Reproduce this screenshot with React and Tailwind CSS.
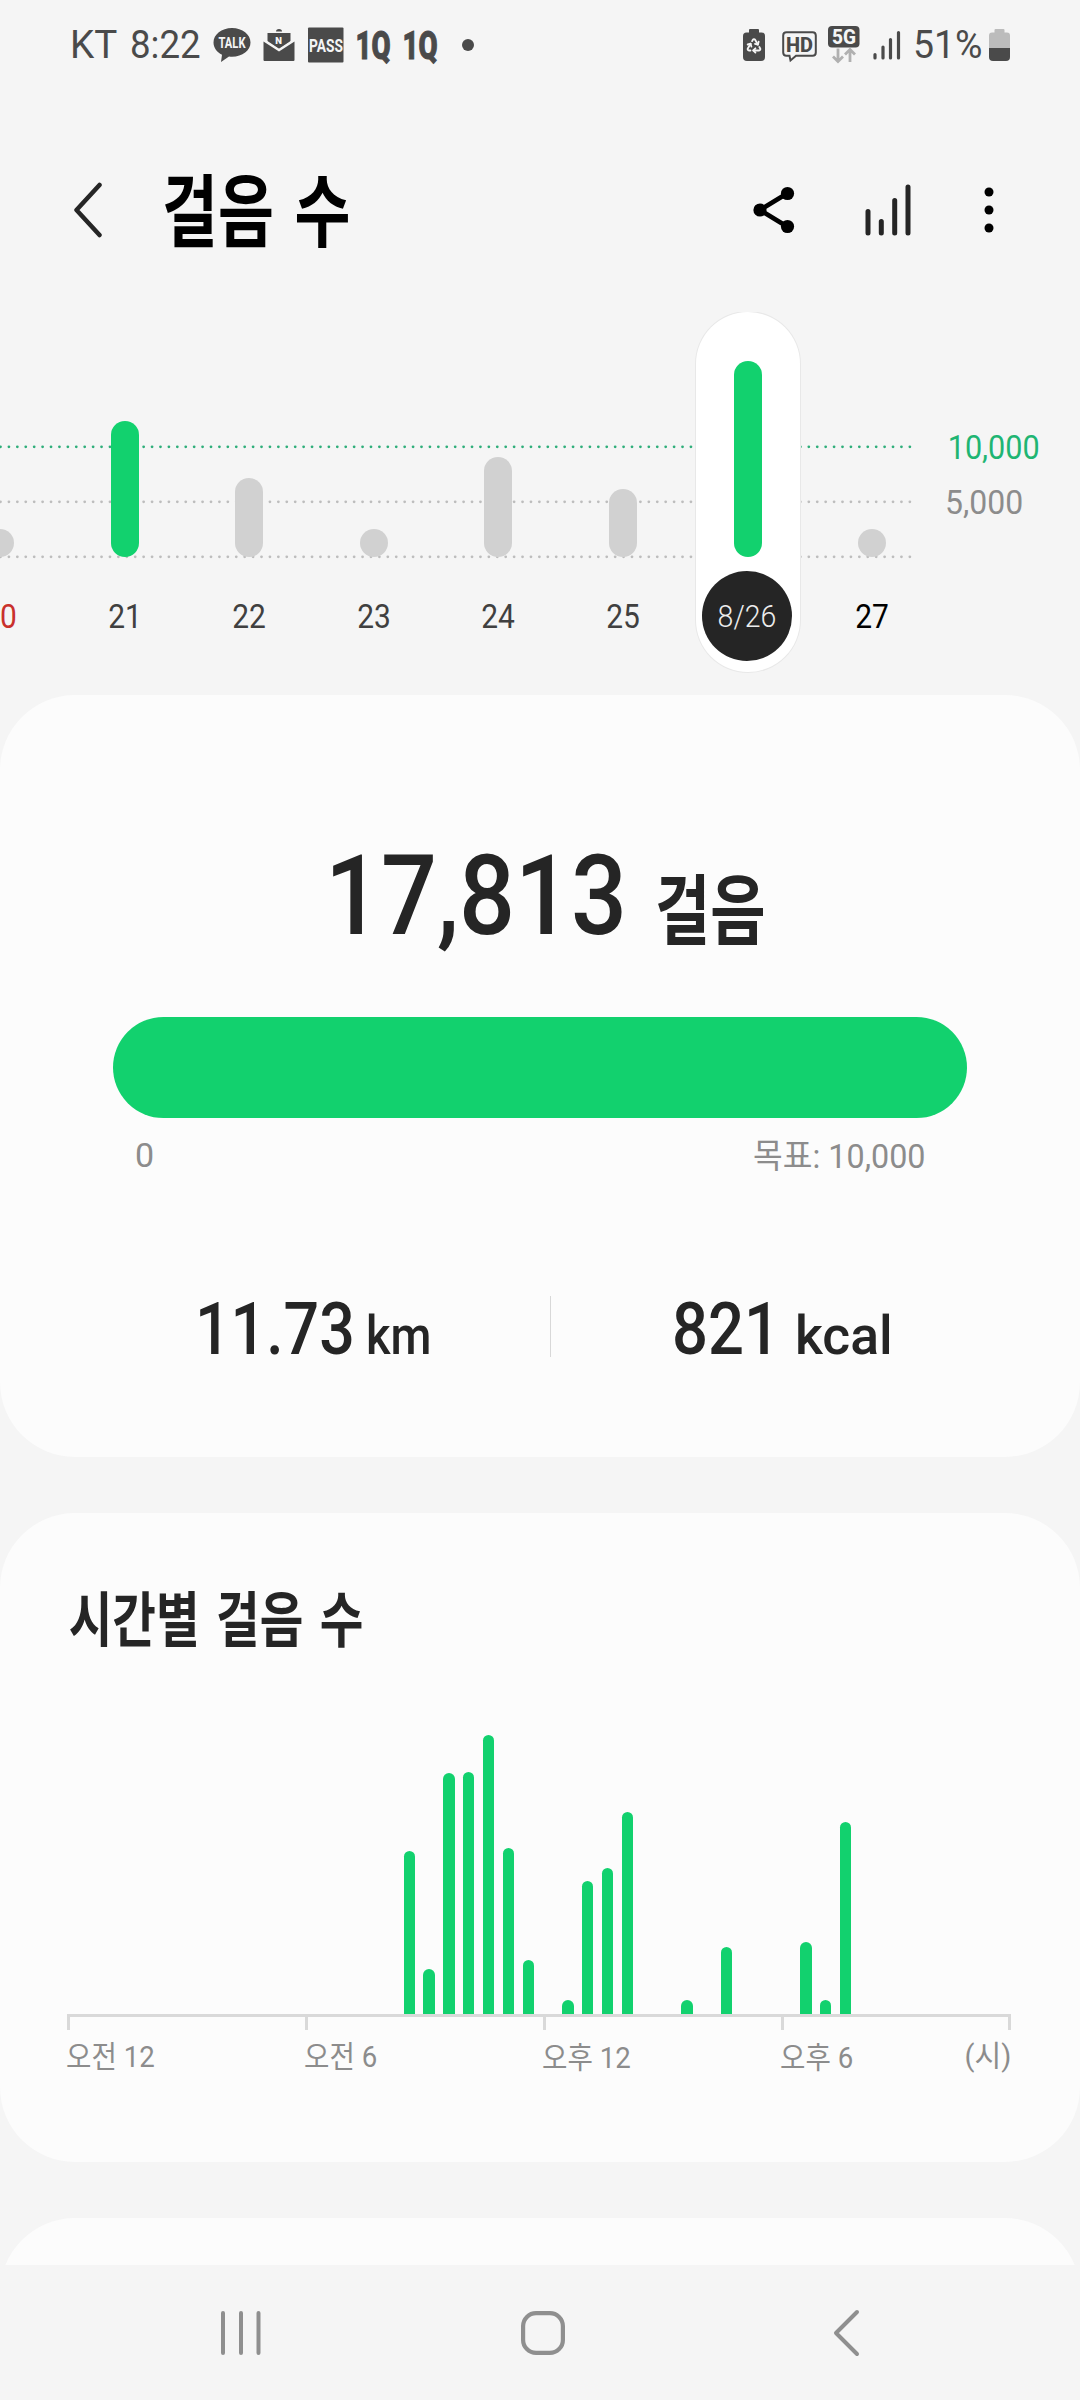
import React from 'react';
import { Recycle } from 'lucide-react';

const DAYS = [
  { label: '20', height: 28, tone: 'text-[#c9302c]' },
  { label: '21', height: 136, reached: true, tone: 'text-[#404040]' },
  { label: '22', height: 79, tone: 'text-[#404040]' },
  { label: '23', height: 28, tone: 'text-[#404040]' },
  { label: '24', height: 100, tone: 'text-[#404040]' },
  { label: '25', height: 68, tone: 'text-[#404040]' },
  { label: '8/26', height: 196, reached: true, selected: true },
  { label: '27', height: 28, tone: 'text-black' },
];

// Half-hour slots, bar heights in px
const SLOTS = [
  0, 0, 0, 0, 0, 0, 0, 0, 0, 0, 0, 0, 0, 0, 0, 0, 0,
  163, 45, 241, 242, 279, 166, 54, 0, 14, 133, 146, 202, 0, 0, 14,
  0, 67, 0, 0, 0, 72, 14, 192,
];

const HOURS = [
  { label: '오전 12', width: 'w-[238px]', shift: 'mt-[12px]' },
  { label: '오전 6', width: 'w-[238px]', shift: 'mt-[12px]' },
  { label: '오후 12', width: 'w-[238px]', shift: 'mt-[13px]' },
  { label: '오후 6', width: 'w-[226px]', shift: 'mt-[13px]' },
];

function StatusBar() {
  return (
    <div className="flex h-[90px] items-center pl-[70px] text-[#4a4a4a]">
      <span className="w-[60px] shrink-0 origin-left scale-x-[0.99] whitespace-nowrap text-[39px] leading-none font-[370]">KT</span>
      <span className="w-[83px] shrink-0 origin-left scale-x-[0.94] whitespace-nowrap text-[39px] leading-none font-[370]">8:22</span>
      <svg className="shrink-0" width="38" height="36" viewBox="0 0 38 36" fill="currentColor">
        <path d="M19 1C8.500 1 .5 7.500.5 15.500c0 5.500 3.500 9.700 8.500 12.200L8 35l8-5.500c1 .1 2 .2 3 .2 10.500 0 18.500-6.200 18.500-14.200S29.500 1 19 1z" />
        <text x="5.500" y="21" fontSize="14" fontWeight="700" textLength="27" lengthAdjust="spacingAndGlyphs" fill="#f5f5f5">TALK</text>
      </svg>
      <svg className="ml-[12px] shrink-0" width="32" height="34" viewBox="0 0 32 34" fill="currentColor">
        <path d="M13 3.500a3 2.500 0 0 1 6 0z" />
        <path d="M4.500 5h23v9L16 21 4.500 14z" />
        <path d="M.5 13.500 16 23.500l15.500-10V32a1 1 0 0 1-1 1h-29a1 1 0 0 1-1-1z" />
        <path d="M1 11.500 16 21.500l15-10" fill="none" stroke="#f5f5f5" strokeWidth="1.500" />
        <text x="12.300" y="15.500" fontSize="9.500" fontWeight="900" fill="#f5f5f5">N</text>
      </svg>
      <svg className="ml-[13px] shrink-0 overflow-visible" width="36" height="36" viewBox="0 0 36 36">
        <rect x="0" y="0.500" width="35.500" height="35" rx="1" fill="currentColor" />
        <text x="1" y="25" fontSize="19" fontWeight="700" textLength="34" lengthAdjust="spacingAndGlyphs" fill="#f5f5f5">PASS</text>
      </svg>
      {[0, 1].map(i => (
        <svg key={i} className="ml-[12px] shrink-0 overflow-visible" width="35" height="34" viewBox="0 0 35 34" fill="currentColor">
          <text x="-0.500" y="31" fontSize="39" fontWeight="900" textLength="35" lengthAdjust="spacingAndGlyphs" stroke="currentColor" strokeWidth="1">1Q</text>
        </svg>
      ))}
      <span className="ml-[24px] h-[12px] w-[12px] shrink-0 rounded-full bg-current" />

      <svg className="ml-[269px] shrink-0" width="22" height="32" viewBox="0 0 22 32" fill="currentColor">
        <path d="M7 0h8q1 0 1 1v2.500h2.500Q22 3.500 22 7v21q0 4-4 4H4q-4 0-4-4V7q0-3.500 3.500-3.500H6V1q0-1 1-1z" />
        <Recycle x="2.500" y="8" width="17" height="17" stroke="#f5f5f5" strokeWidth="2.600" fill="none" />
      </svg>
      <svg className="mt-[2px] ml-[17px] shrink-0 overflow-visible" width="35" height="31" viewBox="0 0 35 31">
        <path d="M4.500 1.200h26q3.300 0 3.300 3.300v17q0 3.300-3.300 3.300H14L8.500 29.500 7.500 24.800h-3q-3.300 0-3.300-3.300v-17q0-3.300 3.300-3.300z" fill="none" stroke="currentColor" strokeWidth="2" />
        <text x="4" y="20.500" fontSize="21" fontWeight="800" textLength="27" lengthAdjust="spacingAndGlyphs" fill="currentColor">HD</text>
      </svg>
      <svg className="ml-[11px] shrink-0 overflow-visible" width="32" height="38" viewBox="0 0 32 38">
        <rect width="31.500" height="21.500" rx="4" fill="currentColor" />
        <text x="4" y="18" fontSize="21" fontWeight="800" textLength="24" lengthAdjust="spacingAndGlyphs" fill="#f5f5f5">5G</text>
        <path d="M10 22.500V35M5 30.500l5 5 5-5M22 36V24M17 28.500l5-5 5 5" fill="none" stroke="#b0b0b0" strokeWidth="2.800" />
      </svg>
      <svg className="ml-[13px] shrink-0" width="28" height="30" viewBox="0 0 28 30" stroke="currentColor" strokeWidth="3.200" strokeLinecap="round">
        <path d="M2 24.500V28M10 17v11M17.500 9.500V28M25.500 2.500V28" />
      </svg>
      <span className="ml-[12px] w-[76px] shrink-0 origin-left scale-x-[0.96] whitespace-nowrap text-[39px] leading-none font-[370]">51%</span>
      <svg className="shrink-0" width="21" height="32" viewBox="0 0 21 32">
        <path d="M6.500 0h8q1 0 1 1v2.500H18q3 0 3 3V20H0V6.500q0-3 3-3h2.500V1q0-1 1-1z" fill="#bcbcbc" />
        <path d="M0 19h21v9q0 4-4 4H4q-4 0-4-4z" fill="currentColor" />
      </svg>
    </div>
  );
}

function Header() {
  return (
    <header className="flex h-[222px] items-center pt-[18px] pl-[73px]">
      <svg className="shrink-0" width="30" height="56" viewBox="0 0 30 56" fill="none" stroke="#252525" strokeWidth="4.500" strokeLinecap="round" strokeLinejoin="round">
        <path d="M26.500 3 3.500 28l23 25" />
      </svg>
      <h1 className="mt-[8px] ml-[59px] w-[587px] shrink-0 origin-left scale-x-[0.77] text-[79px] leading-none font-bold whitespace-nowrap text-black [word-spacing:7px]">걸음 수</h1>
      <svg className="shrink-0" width="46" height="50" viewBox="0 0 46 50">
        <path d="M38 8.500 11 25l27 16.500" fill="none" stroke="black" strokeWidth="4.800" />
        <circle cx="11" cy="25" r="6.600" />
        <circle cx="38.500" cy="8.500" r="6.600" />
        <circle cx="38.500" cy="41.500" r="6.600" />
      </svg>
      <svg className="ml-[70px] shrink-0" width="46" height="54" viewBox="0 0 46 54" stroke="#252525" strokeWidth="5" strokeLinecap="round">
        <path d="M3 28.500V50M16.300 38.500V50M29.700 17.500V50M43 4V50" />
      </svg>
      <svg className="ml-[73px] shrink-0" width="10" height="46" viewBox="0 0 10 46">
        <circle cx="5" cy="5" r="4.500" />
        <circle cx="5" cy="23" r="4.500" />
        <circle cx="5" cy="41" r="4.500" />
      </svg>
    </header>
  );
}

function Day({ label, height, reached, selected, tone }) {
  return (
    <div className="flex w-[124.600px] shrink-0 justify-center">
      <div className={selected ? 'relative h-[360px] w-[104px] rounded-full bg-white shadow-[0_0_0_1px_#e8e8e8]' : 'relative h-[360px] w-[104px]'}>
        <div className="flex h-[245px] items-end justify-center">
          <div className={reached ? 'w-[28px] rounded-full bg-[#12d16e]' : 'w-[28px] rounded-full bg-[#d1d1d1]'} style={{ height }} />
        </div>
        {selected ? (
          <div className="mt-[14px] ml-[6px] flex h-[90px] w-[90px] items-center justify-center rounded-full bg-[#252525]">
            <span className="scale-x-[0.92] text-[31px] leading-none font-[350] text-[#ececec]">{label}</span>
          </div>
        ) : (
          <div className={`mt-[14px] flex h-[90px] items-center justify-center ${tone}`}>
            <span className="scale-x-[0.88] text-[34px] leading-none font-[370]">{label}</span>
          </div>
        )}
      </div>
    </div>
  );
}

function DayChart() {
  return (
    <section className="relative flex h-[383px] overflow-hidden">
      <svg className="absolute top-0 left-0" width="916" height="260" strokeWidth="2.800" strokeLinecap="round" strokeDasharray="0 8.420">
        <path d="M.5 134.800H914" stroke="#2fae7a" />
        <path d="M.5 189.800H914" stroke="#bdbdbd" />
        <path d="M.5 244.800H914" stroke="#bdbdbd" />
      </svg>
      <div className="-ml-[62.200px] flex">
        {DAYS.map(day => (
          <Day key={day.label} {...day} />
        ))}
      </div>
      <div className="pt-[118px] pl-[10px] text-[34px] leading-none font-[370]">
        <p className="origin-left scale-x-[0.9] pl-[3px] text-[#1fb573]">10,000</p>
        <p className="mt-[21px] origin-left scale-x-[0.94] text-[#8c8c8c]">5,000</p>
      </div>
    </section>
  );
}

function SummaryCard() {
  return (
    <section className="h-[762px] rounded-[75px] bg-[#fcfcfc] pt-[145px] text-[#252525]">
      <div className="flex items-baseline pl-[325px] leading-none">
        <span className="w-[330px] origin-left scale-x-[0.88] text-[112px] font-medium">17,813</span>
        <span className="origin-left translate-y-[5px] scale-x-[0.78] text-[77px] font-bold whitespace-nowrap">걸음</span>
      </div>
      <div className="mx-[113px] mt-[65px] h-[101px] rounded-full bg-[#12d16e]" />
      <div className="mt-[20px] flex justify-between pr-[155px] pl-[135px] text-[34px] leading-none font-[370] text-[#8c8c8c]">
        <span>0</span>
        <span className="origin-right translate-y-[1px] scale-x-[0.95]">목표: 10,000</span>
      </div>
      <div className="mt-[121px] flex items-baseline pl-[195px] leading-none font-medium">
        <span className="w-[171px] origin-left scale-x-[0.87] text-[72px]">11.73</span>
        <span className="w-[184px] origin-left scale-x-[0.87] text-[54px]">km</span>
        <span className="h-[61px] w-px translate-y-[3px] bg-[#d8d8d8]" />
        <span className="ml-[121px] w-[123px] origin-left scale-x-[0.88] text-[72px]">821</span>
        <span className="origin-left scale-x-[0.99] text-[54px]">kcal</span>
      </div>
    </section>
  );
}

function HourlyCard() {
  return (
    <section className="mt-[56px] h-[649px] rounded-[75px] bg-[#fcfcfc] pt-[79px]">
      <h2 className="origin-left scale-x-[0.79] pl-[87px] text-[60px] leading-none font-bold text-[#252525] [word-spacing:6px]">시간별 걸음 수</h2>
      <div className="mt-[82px] flex h-[280px] items-end pl-[62.300px]">
        {SLOTS.map((height, i) => (
          <div key={i} className="flex w-[19.840px] shrink-0 justify-center">
            <div className="w-[11.400px] rounded-t-full bg-[#12d16e]" style={{ height }} />
          </div>
        ))}
      </div>
      <div className="mr-[69px] ml-[67px] h-[3px] bg-[#d9d9d9]" />
      <div className="flex pl-[67px]">
        {HOURS.map(({ label, width, shift }) => (
          <div key={label} className={`${width} shrink-0`}>
            <div className="h-[13px] w-[3px] bg-[#d9d9d9]" />
            <p className={`${shift} -ml-px origin-left scale-x-[0.92] text-[30px] leading-none font-[370] whitespace-nowrap text-[#8c8c8c]`}>{label}</p>
          </div>
        ))}
        <div className="-ml-[40px] flex w-[44px] flex-col items-end">
          <div className="h-[13px] w-[3px] bg-[#d9d9d9]" />
          <p className="mt-[11px] origin-right scale-x-[0.97] text-[30px] leading-none font-[370] whitespace-nowrap text-[#8c8c8c]">(시)</p>
        </div>
      </div>
    </section>
  );
}

function NavBar() {
  return (
    <nav className="flex h-[135px] items-center bg-[#f5f5f5] pl-[220px]">
      <svg width="42" height="46" viewBox="0 0 42 46" stroke="#8f8f8f" strokeWidth="4" strokeLinecap="round">
        <path d="M3 3v40M21 3v40M38.500 3v40" />
      </svg>
      <svg className="ml-[258px]" width="46" height="46" viewBox="0 0 46 46" fill="none" stroke="#8f8f8f" strokeWidth="4.200">
        <rect x="3.100" y="3.100" width="39.800" height="39.800" rx="13" />
      </svg>
      <svg className="ml-[265px]" width="30" height="50" viewBox="0 0 30 50" fill="none" stroke="#8f8f8f" strokeWidth="4" strokeLinecap="round" strokeLinejoin="round">
        <path d="M26 4 5 25l21 21" />
      </svg>
    </nav>
  );
}

export default function App() {
  return (
    <div className="h-[2400px] w-[1080px] overflow-hidden bg-[#f5f5f5] font-[Roboto,'Noto_Sans_CJK_KR',sans-serif]">
      <StatusBar />
      <Header />
      <DayChart />
      <SummaryCard />
      <HourlyCard />
      <section className="mt-[56px] h-[47px] overflow-hidden">
        <div className="h-[200px] rounded-[75px] bg-[#fcfcfc]" />
      </section>
      <NavBar />
    </div>
  );
}
